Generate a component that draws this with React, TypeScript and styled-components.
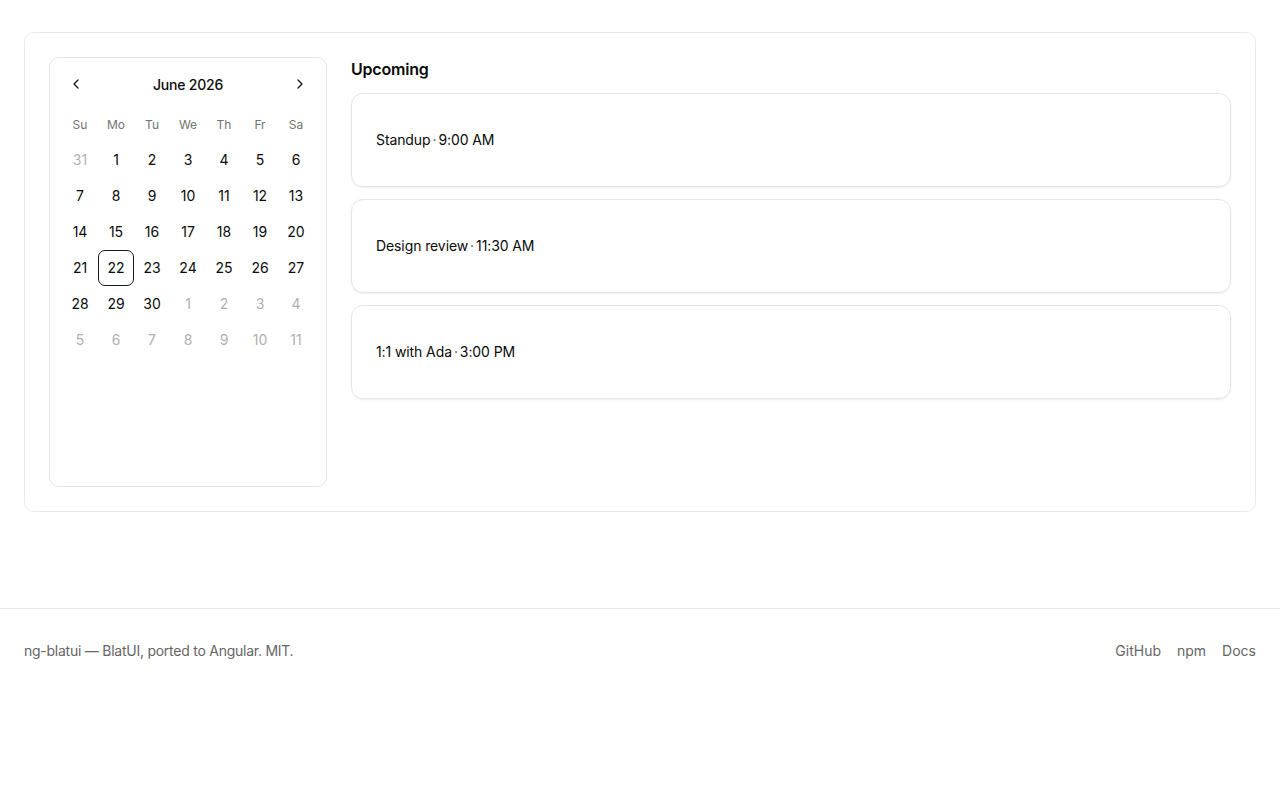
import styled, {createGlobalStyle} from "styled-components";
import {ChevronLeft, ChevronRight} from "lucide-react";

const GlobalStyle = createGlobalStyle`
    * {
        box-sizing: border-box;
    }
    body {
        margin: 0;
        background: #ffffff;
        color: #0a0a0a;
        font-family: Inter, "Noto Sans", sans-serif;
    }
`;

const Main = styled.main`
    padding: 32px 24px 96px;
`;

const Panel = styled.section`
    display: flex;
    gap: 24px;
    padding: 24px;
    border: 1px solid #e8e8e8;
    border-radius: 10px;
`;

const Calendar = styled.div`
    flex: 0 0 278px;
    height: 430px;
    padding: 12px;
    border: 1px solid #e5e5e5;
    border-radius: 10px;
`;

const CalHeader = styled.div`
    display: flex;
    align-items: center;
    justify-content: space-between;
    height: 28px;
    margin-bottom: 8px;
`;

const NavButton = styled.button`
    display: flex;
    align-items: center;
    justify-content: center;
    width: 28px;
    height: 28px;
    padding: 0;
    border: none;
    background: transparent;
    color: #171717;
    cursor: pointer;
`;

const MonthLabel = styled.div`
    font-size: 14px;
    font-weight: 500;
    letter-spacing: -0.2px;
`;

const Grid = styled.div`
    display: grid;
    grid-template-columns: repeat(7, 36px);
    grid-auto-rows: 36px;
`;

const Weekday = styled.div`
    display: flex;
    align-items: center;
    justify-content: center;
    font-size: 12px;
    color: #737373;
`;

const Day = styled.div<{ $muted?: boolean; $selected?: boolean }>`
    display: flex;
    align-items: center;
    justify-content: center;
    padding-bottom: 1px;
    font-size: 14px;
    border-radius: 7px;
    color: ${p => (p.$muted ? "#b0b0b0" : "#0a0a0a")};
    border: 1px solid ${p => (p.$selected ? "#171717" : "transparent")};
`;

const Agenda = styled.div`
    flex: 1;
    display: flex;
    flex-direction: column;
    gap: 12px;
`;

const Title = styled.h2`
    margin: 0;
    font-size: 16px;
    line-height: 24px;
    font-weight: 600;
    letter-spacing: -0.2px;
`;

const EventCard = styled.div`
    padding: 36px 24px;
    border: 1px solid #e5e5e5;
    border-radius: 12px;
    box-shadow: 0 1px 2px rgba(0, 0, 0, 0.07);
    font-size: 14px;
    line-height: 20px;
    font-weight: 400;
    letter-spacing: -0.1px;
`;

const Dot = styled.span`
    margin: 0 2px;
    color: #525252;
`;

const Footer = styled.footer`
    display: flex;
    justify-content: space-between;
    align-items: center;
    padding: 32px 24px;
    border-top: 1px solid #e5e5e5;
    font-size: 14px;
    line-height: 20px;
    color: #666666;
`;

const Credit = styled.span`
    letter-spacing: -0.25px;
`;

const FooterLinks = styled.nav`
    display: flex;
    gap: 16px;
`;

const FooterLink = styled.a`
    color: #666666;
    text-decoration: none;
`;

const weekdays = ["Su", "Mo", "Tu", "We", "Th", "Fr", "Sa"];

const buildDays = () => {
    const days: { n: number; muted: boolean }[] = [{n: 31, muted: true}];
    for (let i = 1; i <= 30; i++) days.push({n: i, muted: false});
    for (let i = 1; i <= 11; i++) days.push({n: i, muted: true});
    return days;
};

const events = [
    {name: "Standup", time: "9:00 AM"},
    {name: "Design review", time: "11:30 AM"},
    {name: "1:1 with Ada", time: "3:00 PM"},
];

const App = () => {
    const days = buildDays();

    return (
        <>
            <GlobalStyle />
            <Main>
                <Panel>
                    <Calendar>
                        <CalHeader>
                            <NavButton aria-label="Previous month"><ChevronLeft size={16} strokeWidth={2} /></NavButton>
                            <MonthLabel>June 2026</MonthLabel>
                            <NavButton aria-label="Next month"><ChevronRight size={16} strokeWidth={2} /></NavButton>
                        </CalHeader>
                        <Grid>
                            {weekdays.map(w => <Weekday key={w}>{w}</Weekday>)}
                            {days.map((d, i) => (
                                <Day key={i} $muted={d.muted} $selected={!d.muted && d.n === 22}>{d.n}</Day>
                            ))}
                        </Grid>
                    </Calendar>
                    <Agenda>
                        <Title>Upcoming</Title>
                        {events.map(e => (
                            <EventCard key={e.name}>
                                {e.name}<Dot>·</Dot>{e.time}
                            </EventCard>
                        ))}
                    </Agenda>
                </Panel>
            </Main>
            <Footer>
                <Credit>ng-blatui — BlatUI, ported to Angular. MIT.</Credit>
                <FooterLinks>
                    <FooterLink href="#">GitHub</FooterLink>
                    <FooterLink href="#">npm</FooterLink>
                    <FooterLink href="#">Docs</FooterLink>
                </FooterLinks>
            </Footer>
        </>
    );
};

export default App;
